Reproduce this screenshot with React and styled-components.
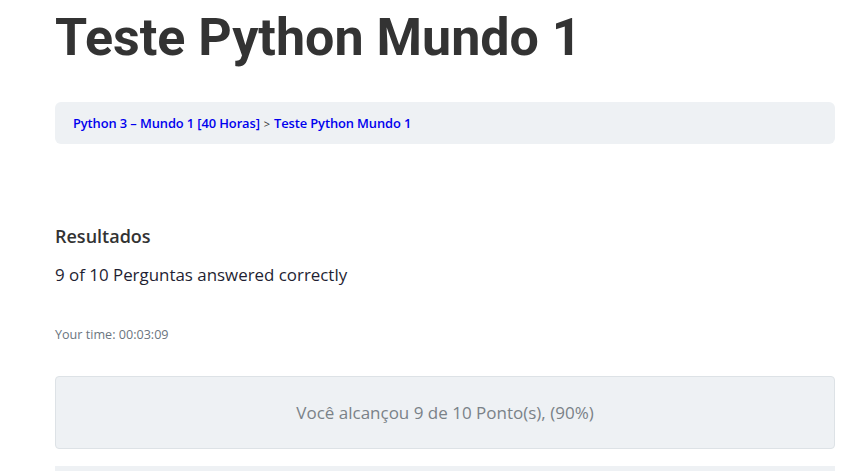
import React from 'react';
import styled, { createGlobalStyle } from 'styled-components';

const GlobalStyle = createGlobalStyle`
  html, body {
    margin: 0;
    padding: 0;
    background: #fff;
    font-family: "Open Sans", Lato, sans-serif;
  }
`;

const Page = styled.main`
  width: 780px;
  margin: 0 0 0 55px;
  padding-top: 4px;
`;

const Title = styled.h1`
  margin: 0;
  font-family: Roboto, "Liberation Sans", sans-serif;
  font-weight: 700;
  font-size: 52px;
  line-height: 68px;
  color: #333;
  letter-spacing: 0;
`;

const Crumbs = styled.nav`
  margin-top: 30px;
  height: 42px;
  display: flex;
  align-items: center;
  padding: 0 18px;
  background: #eef1f4;
  border-radius: 6px;
  font-size: 12.9px;
  font-weight: 600;
  letter-spacing: -0.1px;
`;

const Crumb = styled.a`
  color: #0000ee;
  text-decoration: none;
`;

const Sep = styled.span`
  color: #333;
  font-weight: 400;
  font-size: 11px;
  margin: 0 4px;
`;

const Results = styled.section`
  margin-top: 80px;
`;

const Heading = styled.h4`
  margin: 0;
  font-size: 18px;
  font-weight: 600;
  color: #333;
  line-height: 24px;
`;

const Score = styled.p`
  margin: 16px 0 0;
  font-size: 16.9px;
  color: #1f1f33;
  line-height: 22px;
`;

const Time = styled.p`
  margin: 40px 0 0;
  font-size: 12.6px;
  color: #6b7580;
  line-height: 18px;
`;

const Points = styled.div`
  margin-top: 32px;
  height: 71px;
  display: flex;
  align-items: center;
  justify-content: center;
  background: #eef1f4;
  border: 1px solid #dde2e6;
  border-radius: 4px;
  font-size: 17px;
  color: #7a8288;
`;

const Next = styled.div`
  margin-top: 17px;
  height: 20px;
  background: #eef1f4;
`;

export default function App() {
  return (
    <>
      <GlobalStyle />
      <Page>
        <Title>Teste Python Mundo 1</Title>
        <Crumbs>
          <Crumb href="#">Python 3 – Mundo 1 [40 Horas]</Crumb>
          <Sep>&gt;</Sep>
          <Crumb href="#">Teste Python Mundo 1</Crumb>
        </Crumbs>
        <Results>
          <Heading>Resultados</Heading>
          <Score>9 of 10 Perguntas answered correctly</Score>
          <Time>Your time: 00:03:09</Time>
          <Points>Você alcançou 9 de 10 Ponto(s), (90%)</Points>
          <Next />
        </Results>
      </Page>
    </>
  );
}
